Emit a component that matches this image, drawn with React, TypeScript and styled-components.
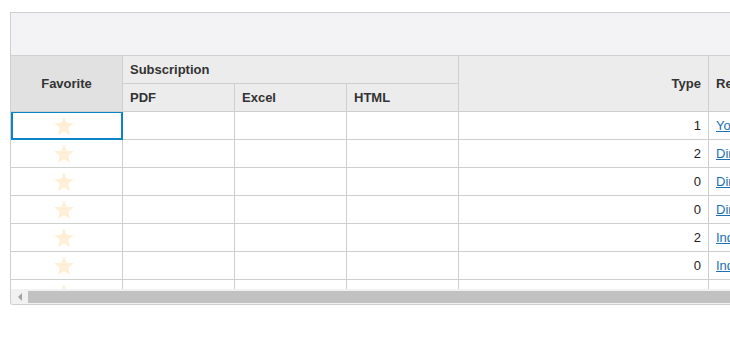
import React from "react";
import styled, { createGlobalStyle } from "styled-components";

const Global = createGlobalStyle`
  html, body { margin: 0; padding: 0; background: #fff; overflow: hidden; }
  body { font-family: "Liberation Sans", Arial, sans-serif; color: #333; }
`;

const Page = styled.div`
  width: 730px;
  height: 350px;
  overflow: hidden;
  padding-left: 10px;
  box-sizing: border-box;
`;

const Title = styled.h2`
  margin: -18px 0 10px 79px;
  height: 20px;
  font-size: 16px;
  line-height: 20px;
  font-weight: normal;
  color: #222;
  white-space: nowrap;
`;

const Grid = styled.div`
  width: 920px;
  border: 1px solid #cfcfcf;
  border-right: none;
  border-bottom-left-radius: 3px;
  overflow: hidden;
`;

const Toolbar = styled.div`
  height: 42px;
  background: #f3f3f5;
  border-bottom: 1px solid #cfcfcf;
`;

const COLS = "112px 112px 112px 112px 250px 220px";

const Header = styled.div`
  display: grid;
  grid-template-columns: ${COLS};
  grid-template-rows: 28px 28px;
  background: #ececec;
`;

const HeadCell = styled.div<{ $align?: "left" | "center" | "right"; $dark?: boolean }>`
  box-sizing: border-box;
  border-right: 1px solid #cfcfcf;
  border-bottom: 1px solid #cfcfcf;
  display: flex;
  align-items: center;
  justify-content: ${(p) =>
    p.$align === "center" ? "center" : p.$align === "right" ? "flex-end" : "flex-start"};
  padding: 0 7px;
  font-size: 13px;
  font-weight: bold;
  color: #333;
  background: ${(p) => (p.$dark ? "#e1e1e1" : "#ececec")};
  white-space: nowrap;
  overflow: hidden;
`;

const Body = styled.div`
  height: 177px;
  overflow: hidden;
`;

const Row = styled.div`
  display: grid;
  grid-template-columns: ${COLS};
  height: 28px;
`;

const Cell = styled.div<{ $align?: "left" | "center" | "right"; $focused?: boolean }>`
  position: relative;
  box-sizing: border-box;
  border-right: 1px solid #cfcfcf;
  border-bottom: 1px solid #cfcfcf;
  display: flex;
  align-items: center;
  justify-content: ${(p) =>
    p.$align === "center" ? "center" : p.$align === "right" ? "flex-end" : "flex-start"};
  padding: 0 7px;
  font-size: 13px;
  color: #222;
  white-space: nowrap;
  overflow: visible;
  &::after {
    content: "";
    display: ${(p) => (p.$focused ? "block" : "none")};
    position: absolute;
    left: 0;
    top: -1px;
    right: -1px;
    bottom: -1px;
    border: 2px solid #0a84c8;
  }
`;

const StarCell = styled(Cell)`
  padding: 0 6px 0 0;
`;

const Link = styled.a`
  color: #1a6fb5;
  text-decoration: underline;
  cursor: pointer;
`;

const Scrollbar = styled.div`
  display: flex;
  height: 15px;
  box-sizing: border-box;
  padding: 2px 0 1px;
  background: #f1f1f1;
`;

const ScrollButton = styled.div`
  width: 17px;
  display: flex;
  align-items: center;
  justify-content: center;
`;

const Thumb = styled.div`
  flex: 1;
  background: #c1c1c1;
`;

const Star = () => (
  <svg width="22" height="22" viewBox="0 0 24 24">
    <polygon
      points="12,1.2 14.8,8.4 22.8,8.9 16.7,14 18.6,21.8 12,17.6 5.4,21.8 7.3,14 1.2,8.9 9.2,8.4"
      fill="#ffefd6"
    />
  </svg>
);

const rows = [
  { type: 1, report: "Your Sales Report" },
  { type: 2, report: "Direct Sales" },
  { type: 0, report: "Direct Costs" },
  { type: 0, report: "Direct Revenue" },
  { type: 2, report: "Indirect Costs" },
  { type: 0, report: "Indirect Sales" },
  { type: 1, report: "Summary" },
];

export default function App() {
  return (
    <>
      <Global />
      <Page>
        <Title>Subscriptions</Title>
        <Grid>
          <Toolbar />
          <Header>
            <HeadCell $align="center" $dark style={{ gridRow: "1 / span 2" }}>
              Favorite
            </HeadCell>
            <HeadCell style={{ gridColumn: "2 / span 3" }}>Subscription</HeadCell>
            <HeadCell $align="right" style={{ gridColumn: "5", gridRow: "1 / span 2" }}>
              Type
            </HeadCell>
            <HeadCell style={{ gridColumn: "6", gridRow: "1 / span 2" }}>Report</HeadCell>
            <HeadCell style={{ gridColumn: "2", gridRow: "2" }}>PDF</HeadCell>
            <HeadCell style={{ gridColumn: "3", gridRow: "2" }}>Excel</HeadCell>
            <HeadCell style={{ gridColumn: "4", gridRow: "2" }}>HTML</HeadCell>
          </Header>
          <Body>
            {rows.map((r, i) => (
              <Row key={i}>
                <StarCell $align="center" $focused={i === 0}>
                  <Star />
                </StarCell>
                <Cell />
                <Cell />
                <Cell />
                <Cell $align="right">{r.type}</Cell>
                <Cell>
                  <Link>{r.report}</Link>
                </Cell>
              </Row>
            ))}
          </Body>
          <Scrollbar>
            <ScrollButton>
              <svg width="6" height="8" viewBox="0 0 6 8">
                <polygon points="5,0 5,8 1,4" fill="#a3a3a3" />
              </svg>
            </ScrollButton>
            <Thumb />
          </Scrollbar>
        </Grid>
      </Page>
    </>
  );
}
